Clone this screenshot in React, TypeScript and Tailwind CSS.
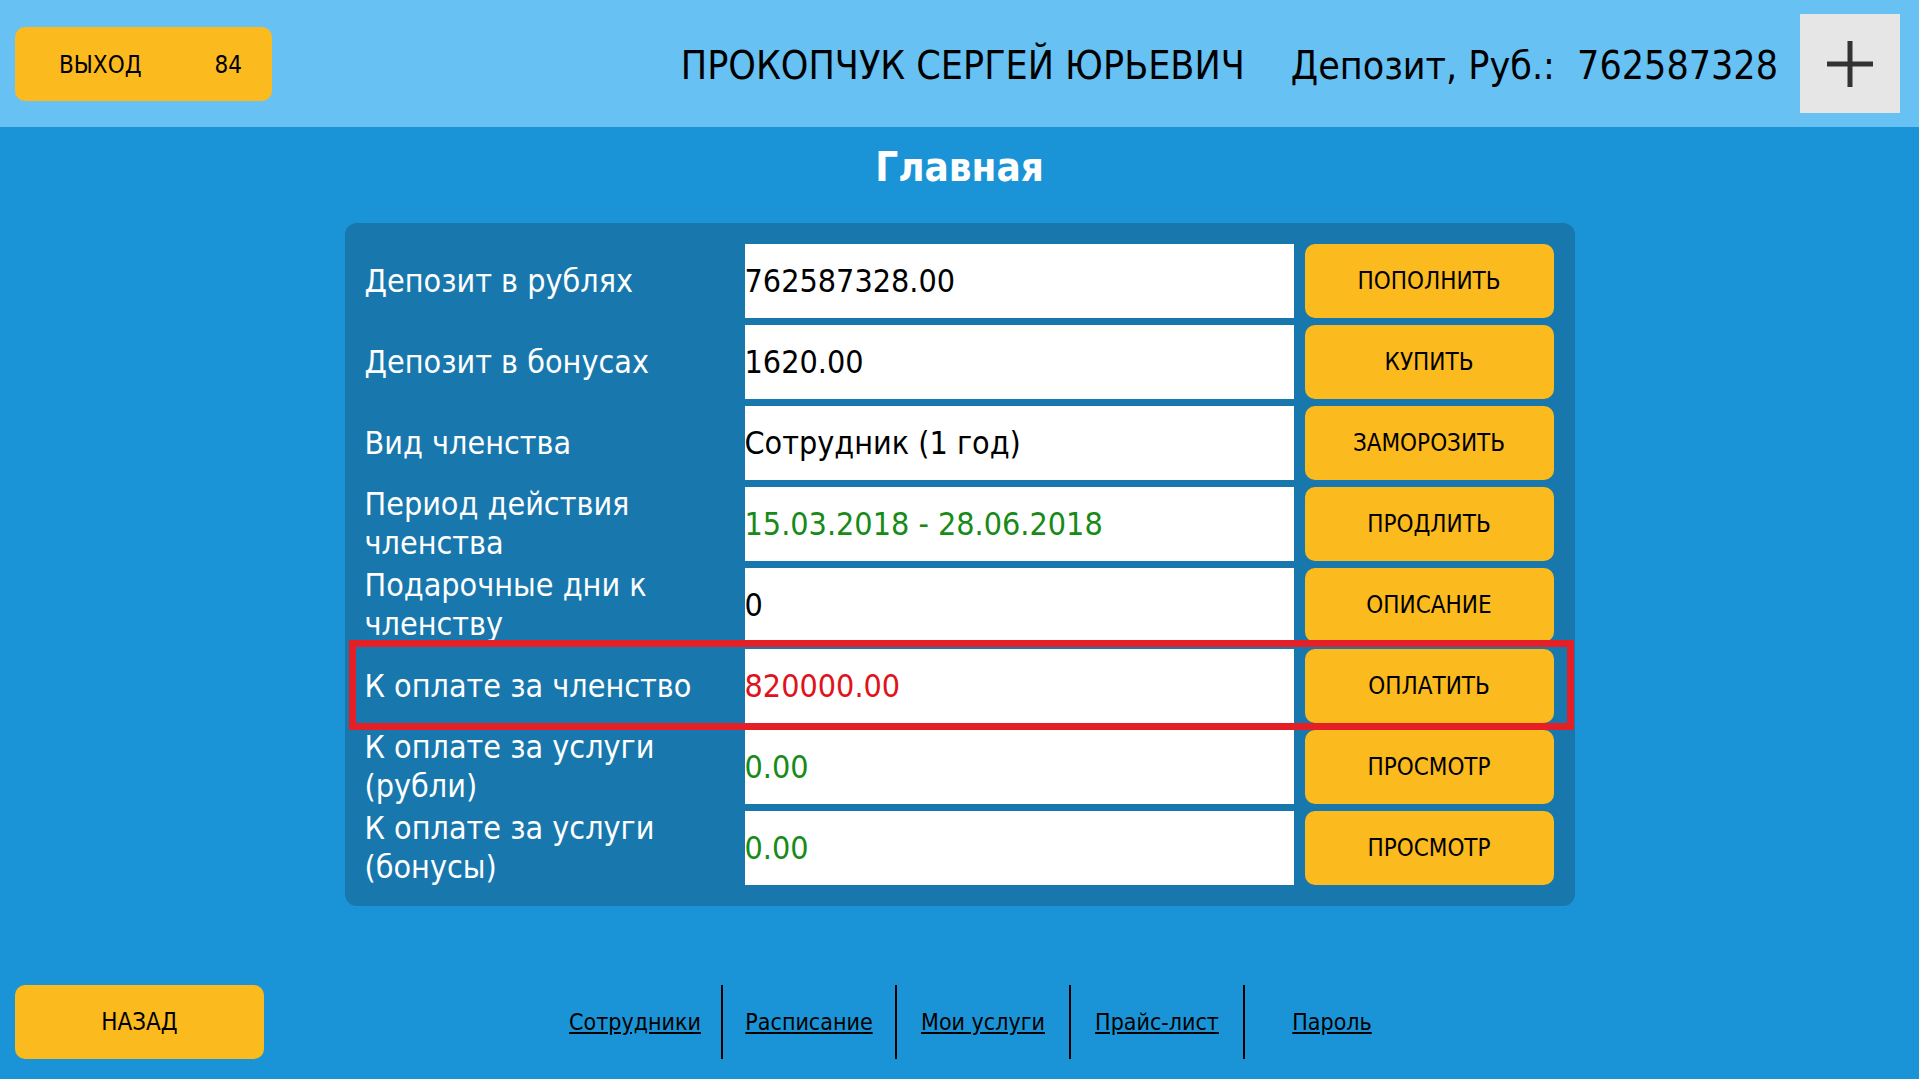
type Row = {
  label: string;
  value: string;
  tone?: "green" | "red";
  action: string;
  marked?: boolean;
};

const rows: Row[] = [
  { label: "Депозит в рублях", value: "762587328.00", action: "ПОПОЛНИТЬ" },
  { label: "Депозит в бонусах", value: "1620.00", action: "КУПИТЬ" },
  { label: "Вид членства", value: "Сотрудник (1 год)", action: "ЗАМОРОЗИТЬ" },
  { label: "Период действия членства", value: "15.03.2018 - 28.06.2018", tone: "green", action: "ПРОДЛИТЬ" },
  { label: "Подарочные дни к членству", value: "0", action: "ОПИСАНИЕ" },
  { label: "К оплате за членство", value: "820000.00", tone: "red", action: "ОПЛАТИТЬ", marked: true },
  { label: "К оплате за услуги (рубли)", value: "0.00", tone: "green", action: "ПРОСМОТР" },
  { label: "К оплате за услуги (бонусы)", value: "0.00", tone: "green", action: "ПРОСМОТР" },
];

const links = ["Сотрудники", "Расписание", "Мои услуги", "Прайс-лист", "Пароль"];

function InfoRow({ row }: { row: Row }) {
  const valueColor =
    row.tone === "green" ? "text-[#178a17]" : row.tone === "red" ? "text-[#e0121c]" : "text-black";
  return (
    <div className="relative flex h-[74px]">
      <div className="flex w-[380px] items-center text-[32px] leading-[39px] text-white">
        {row.label}
      </div>
      <div className={`flex w-[549px] items-center bg-white text-[32px] ${valueColor}`}>{row.value}</div>
      <button className="ml-[11px] flex w-[249px] items-center justify-center rounded-[10px] bg-[#fbba1d] text-[24px] text-black">
        {row.action}
      </button>
      {row.marked && (
        <div className="pointer-events-none absolute -top-[9px] -bottom-[7px] -left-[16px] -right-[19px] z-10 border-[7px] border-[#e41f26]" />
      )}
    </div>
  );
}

export default function App() {
  return (
    <div className="flex min-h-[1079px] flex-col bg-[#1a94d6] font-['DejaVu_Sans_Condensed','DejaVu_Sans',sans-serif] [font-stretch:condensed]">
      <header className="flex h-[127px] items-center bg-[#67c1f3] pl-[15px] pr-[19px]">
        <button className="flex h-[74px] w-[257px] items-center justify-between rounded-[10px] bg-[#fbba1d] pl-[44px] pr-[30px] pt-[2px] text-[24px] text-black">
          <span>ВЫХОД</span>
          <span>84</span>
        </button>
        <div className="ml-auto flex items-center gap-[46px] pt-[6px] text-[39px] text-black">
          <span>ПРОКОПЧУК СЕРГЕЙ ЮРЬЕВИЧ</span>
          <span>Депозит, Руб.:&nbsp; 762587328</span>
        </div>
        <button className="ml-[22px] flex h-[99px] w-[100px] items-center justify-center bg-[#e6e6e6]">
          <svg width="46" height="46" viewBox="0 0 46 46">
            <rect x="20.5" y="0" width="5" height="46" fill="#333" />
            <rect x="0" y="20.5" width="46" height="5" fill="#333" />
          </svg>
        </button>
      </header>

      <h1 className="mt-[18px] text-center text-[40px] font-bold leading-[44px] text-white">Главная</h1>

      <section className="mx-auto mt-[34px] flex w-[1230px] flex-col gap-[7px] rounded-[12px] bg-[#1878ae] px-[20px] py-[21px]">
        {rows.map((row) => (
          <InfoRow key={row.label + row.action} row={row} />
        ))}
      </section>

      <footer className="mt-[79px] flex items-center pl-[15px]">
        <button className="h-[74px] w-[249px] rounded-[10px] bg-[#fbba1d] text-[24px] text-black">НАЗАД</button>
        <nav className="ml-[285px] flex h-[74px]">
          {links.map((name, i) => (
            <div
              key={name}
              className={`flex w-[174px] items-center justify-center ${i < links.length - 1 ? "border-r-2 border-black" : ""}`}
            >
              <a href="#" className="text-[23px] text-black underline">
                {name}
              </a>
            </div>
          ))}
        </nav>
      </footer>
    </div>
  );
}
